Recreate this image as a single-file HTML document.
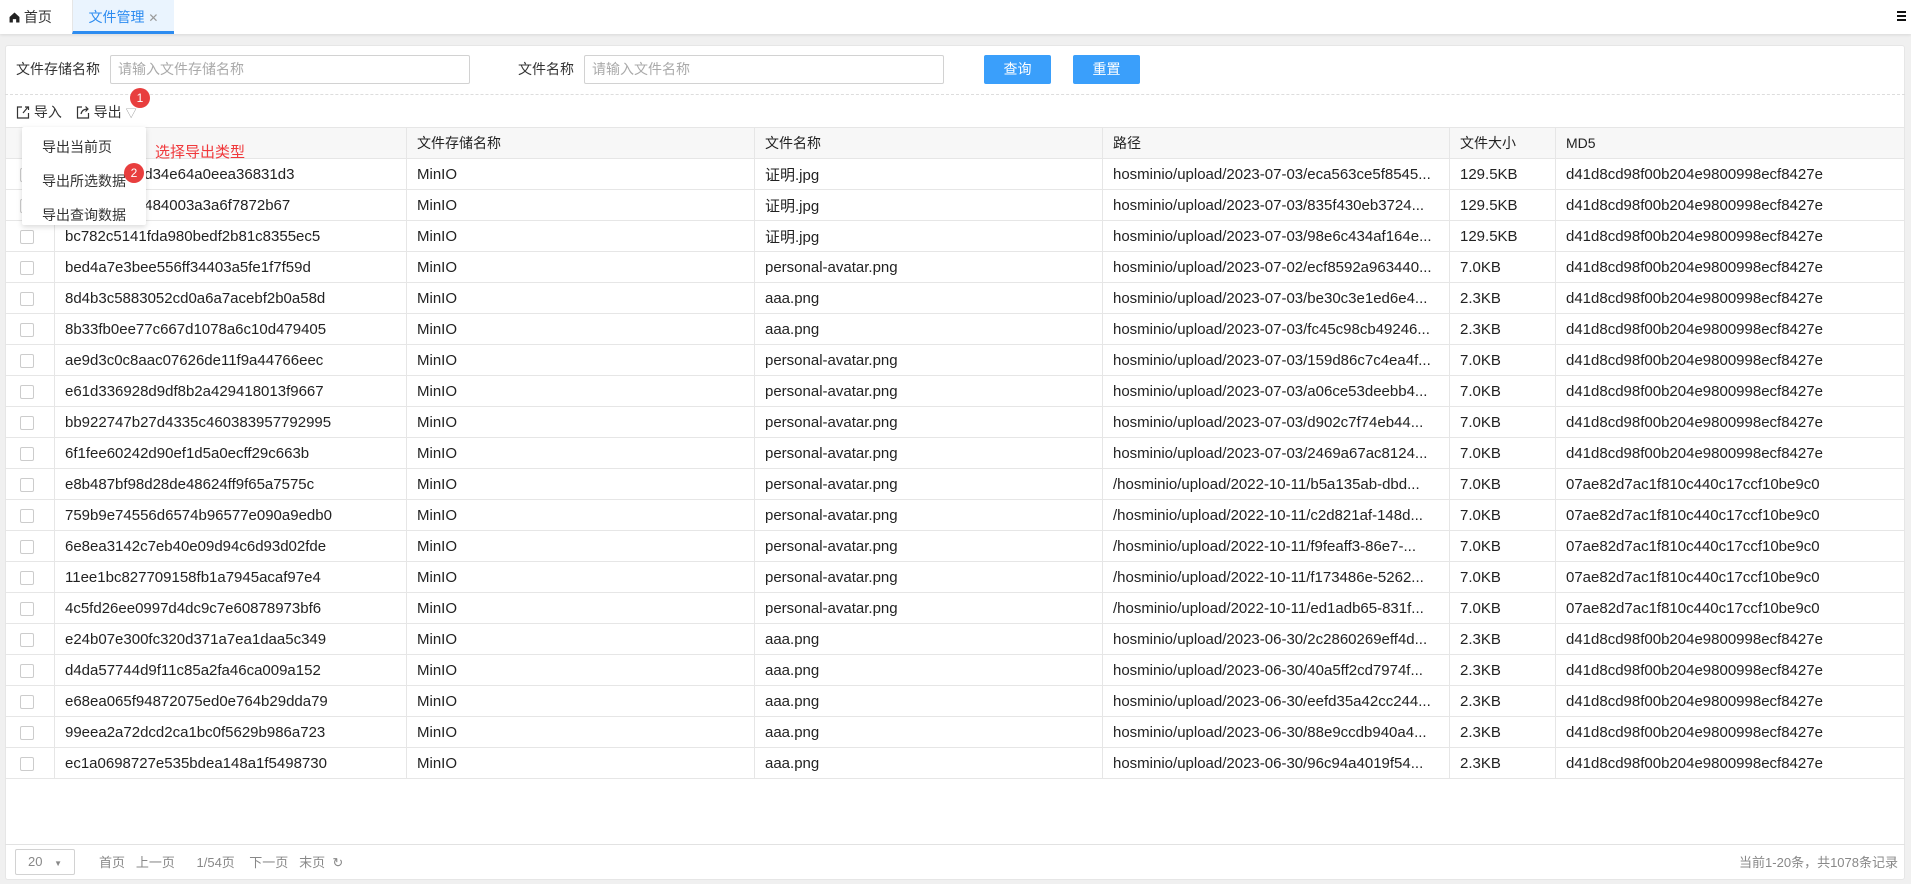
<!DOCTYPE html>
<html><head><meta charset="utf-8"><style>
*{box-sizing:border-box;margin:0;padding:0}
body{width:1911px;height:884px;background:#f0f0f0;font-family:"Liberation Sans","Noto Sans CJK SC",sans-serif;font-size:14px;color:#333;position:relative;overflow:hidden}
.top{position:absolute;left:0;top:0;width:1911px;height:34px;background:#fff;box-shadow:0 1px 3px rgba(0,0,0,.1)}
.tab{position:absolute;top:0;height:34px;line-height:34px;font-size:14px}
.card{position:absolute;left:5px;top:45px;width:1900px;height:835px;background:#fff;border-radius:3px;border:1px solid #e6e6e6}
.lbl{position:absolute;top:59px;font-size:14px;color:#333}
.inp{position:absolute;top:55px;height:29px;border:1px solid #d2d2d2;border-radius:2px;color:#aaa;padding-left:7px;line-height:27px;font-size:14px;background:#fff}
.btn{position:absolute;top:55px;width:67px;height:29px;background:#3a9ffb;color:#fff;text-align:center;line-height:29px;border-radius:2px;font-size:14px}
table{position:absolute;left:5px;top:127px;border-collapse:collapse;table-layout:fixed;width:1900px}
td,th{border:1px solid #e6e6e6;height:31px;padding:0 10px;font-weight:normal;text-align:left;white-space:nowrap;overflow:hidden;font-size:15px;color:#222}
th{background:#f7f7f7;font-size:14px}
.cb{display:inline-block;width:14px;height:14px;border:1px solid #ccc;border-radius:2px;vertical-align:middle;margin-left:4px}
.menu{position:absolute;left:22px;top:127px;width:124px;height:98px;background:#fff;box-shadow:0 2px 6px rgba(0,0,0,.15);z-index:5;border-radius:2px}
.menu div{position:absolute;left:20px;font-size:14px;color:#333}
.badge{position:absolute;width:20px;height:20px;border-radius:50%;background:#e83e3e;color:#fff;font-size:12px;text-align:center;line-height:20px;z-index:6}
.foot{position:absolute;top:845px;font-size:13px;color:#888;line-height:35px}
</style></head><body>
<div class="top">
 <div class="tab" style="left:9px;width:62px"><svg width="11" height="11" viewBox="0 0 10 10" style="vertical-align:-1px"><path d="M5 0.5L0.5 4.5V9.5H3.5V6.5H6.5V9.5H9.5V4.5Z" fill="#222"/></svg> 首页</div>
 <div class="tab" style="left:72px;width:102px;background:#eaf4fe;color:#2d8cf0;text-align:center;border-bottom:3px solid #2d8cf0;border-left:1px solid #e6e6e6">文件管理 <span style="color:#999;font-size:12px">✕</span></div>
 <div style="position:absolute;right:5px;top:11px;width:9px;height:10px;border-top:2px solid #111;border-bottom:2px solid #111"><div style="margin-top:2px;height:2px;background:#111"></div></div>
</div>
<div class="card"></div>
<div class="lbl" style="left:16px">文件存储名称</div>
<div class="inp" style="left:110px;width:360px">请输入文件存储名称</div>
<div class="lbl" style="left:518px">文件名称</div>
<div class="inp" style="left:584px;width:360px">请输入文件名称</div>
<div class="btn" style="left:984px">查询</div>
<div class="btn" style="left:1073px">重置</div>
<div style="position:absolute;left:5px;top:94px;width:1900px;border-top:1px dashed #ddd"></div>
<div style="position:absolute;left:16px;top:102px;font-size:14px">
<svg width="14" height="14" viewBox="0 0 14 14" style="vertical-align:-2px"><path d="M6 2H1.5V13H12.5V8M7 8L12 2M9 2H12.5V5" fill="none" stroke="#333" stroke-width="1.2"/></svg> 导入
<span style="margin-left:10px"><svg width="14" height="14" viewBox="0 0 14 14" style="vertical-align:-2px"><path d="M6 2H1.5V13H12.5V8M5 9Q6 4 12 4M9.5 1.5L12 4L9.5 6.5" fill="none" stroke="#333" stroke-width="1.2"/></svg> 导出 <span style="color:#999;font-size:11px">▽</span></span></div>
<div class="badge" style="left:130px;top:88px">1</div>
<div class="badge" style="left:124px;top:163px">2</div>
<div class="menu"><div style="top:10px">导出当前页</div><div style="top:44px">导出所选数据</div><div style="top:78px">导出查询数据</div></div>
<div style="position:absolute;left:155px;top:141px;color:#f0393c;font-size:15px;z-index:6">选择导出类型</div>
<table>
<colgroup><col style="width:49px"><col style="width:352px"><col style="width:348px"><col style="width:348px"><col style="width:347px"><col style="width:106px"><col></colgroup>
<tr><th></th><th></th><th>文件存储名称</th><th>文件名称</th><th>路径</th><th>文件大小</th><th>MD5</th></tr>
<tr><td><span class="cb"></span></td><td>65a9f333e9d34e64a0eea36831d3</td><td>MinIO</td><td>证明.jpg</td><td>hosminio/upload/2023-07-03/eca563ce5f8545...</td><td>129.5KB</td><td>d41d8cd98f00b204e9800998ecf8427e</td></tr>
<tr><td><span class="cb"></span></td><td>3a81e0f470484003a3a6f7872b67</td><td>MinIO</td><td>证明.jpg</td><td>hosminio/upload/2023-07-03/835f430eb3724...</td><td>129.5KB</td><td>d41d8cd98f00b204e9800998ecf8427e</td></tr>
<tr><td><span class="cb"></span></td><td>bc782c5141fda980bedf2b81c8355ec5</td><td>MinIO</td><td>证明.jpg</td><td>hosminio/upload/2023-07-03/98e6c434af164e...</td><td>129.5KB</td><td>d41d8cd98f00b204e9800998ecf8427e</td></tr>
<tr><td><span class="cb"></span></td><td>bed4a7e3bee556ff34403a5fe1f7f59d</td><td>MinIO</td><td>personal-avatar.png</td><td>hosminio/upload/2023-07-02/ecf8592a963440...</td><td>7.0KB</td><td>d41d8cd98f00b204e9800998ecf8427e</td></tr>
<tr><td><span class="cb"></span></td><td>8d4b3c5883052cd0a6a7acebf2b0a58d</td><td>MinIO</td><td>aaa.png</td><td>hosminio/upload/2023-07-03/be30c3e1ed6e4...</td><td>2.3KB</td><td>d41d8cd98f00b204e9800998ecf8427e</td></tr>
<tr><td><span class="cb"></span></td><td>8b33fb0ee77c667d1078a6c10d479405</td><td>MinIO</td><td>aaa.png</td><td>hosminio/upload/2023-07-03/fc45c98cb49246...</td><td>2.3KB</td><td>d41d8cd98f00b204e9800998ecf8427e</td></tr>
<tr><td><span class="cb"></span></td><td>ae9d3c0c8aac07626de11f9a44766eec</td><td>MinIO</td><td>personal-avatar.png</td><td>hosminio/upload/2023-07-03/159d86c7c4ea4f...</td><td>7.0KB</td><td>d41d8cd98f00b204e9800998ecf8427e</td></tr>
<tr><td><span class="cb"></span></td><td>e61d336928d9df8b2a429418013f9667</td><td>MinIO</td><td>personal-avatar.png</td><td>hosminio/upload/2023-07-03/a06ce53deebb4...</td><td>7.0KB</td><td>d41d8cd98f00b204e9800998ecf8427e</td></tr>
<tr><td><span class="cb"></span></td><td>bb922747b27d4335c460383957792995</td><td>MinIO</td><td>personal-avatar.png</td><td>hosminio/upload/2023-07-03/d902c7f74eb44...</td><td>7.0KB</td><td>d41d8cd98f00b204e9800998ecf8427e</td></tr>
<tr><td><span class="cb"></span></td><td>6f1fee60242d90ef1d5a0ecff29c663b</td><td>MinIO</td><td>personal-avatar.png</td><td>hosminio/upload/2023-07-03/2469a67ac8124...</td><td>7.0KB</td><td>d41d8cd98f00b204e9800998ecf8427e</td></tr>
<tr><td><span class="cb"></span></td><td>e8b487bf98d28de48624ff9f65a7575c</td><td>MinIO</td><td>personal-avatar.png</td><td>/hosminio/upload/2022-10-11/b5a135ab-dbd...</td><td>7.0KB</td><td>07ae82d7ac1f810c440c17ccf10be9c0</td></tr>
<tr><td><span class="cb"></span></td><td>759b9e74556d6574b96577e090a9edb0</td><td>MinIO</td><td>personal-avatar.png</td><td>/hosminio/upload/2022-10-11/c2d821af-148d...</td><td>7.0KB</td><td>07ae82d7ac1f810c440c17ccf10be9c0</td></tr>
<tr><td><span class="cb"></span></td><td>6e8ea3142c7eb40e09d94c6d93d02fde</td><td>MinIO</td><td>personal-avatar.png</td><td>/hosminio/upload/2022-10-11/f9feaff3-86e7-...</td><td>7.0KB</td><td>07ae82d7ac1f810c440c17ccf10be9c0</td></tr>
<tr><td><span class="cb"></span></td><td>11ee1bc827709158fb1a7945acaf97e4</td><td>MinIO</td><td>personal-avatar.png</td><td>/hosminio/upload/2022-10-11/f173486e-5262...</td><td>7.0KB</td><td>07ae82d7ac1f810c440c17ccf10be9c0</td></tr>
<tr><td><span class="cb"></span></td><td>4c5fd26ee0997d4dc9c7e60878973bf6</td><td>MinIO</td><td>personal-avatar.png</td><td>/hosminio/upload/2022-10-11/ed1adb65-831f...</td><td>7.0KB</td><td>07ae82d7ac1f810c440c17ccf10be9c0</td></tr>
<tr><td><span class="cb"></span></td><td>e24b07e300fc320d371a7ea1daa5c349</td><td>MinIO</td><td>aaa.png</td><td>hosminio/upload/2023-06-30/2c2860269eff4d...</td><td>2.3KB</td><td>d41d8cd98f00b204e9800998ecf8427e</td></tr>
<tr><td><span class="cb"></span></td><td>d4da57744d9f11c85a2fa46ca009a152</td><td>MinIO</td><td>aaa.png</td><td>hosminio/upload/2023-06-30/40a5ff2cd7974f...</td><td>2.3KB</td><td>d41d8cd98f00b204e9800998ecf8427e</td></tr>
<tr><td><span class="cb"></span></td><td>e68ea065f94872075ed0e764b29dda79</td><td>MinIO</td><td>aaa.png</td><td>hosminio/upload/2023-06-30/eefd35a42cc244...</td><td>2.3KB</td><td>d41d8cd98f00b204e9800998ecf8427e</td></tr>
<tr><td><span class="cb"></span></td><td>99eea2a72dcd2ca1bc0f5629b986a723</td><td>MinIO</td><td>aaa.png</td><td>hosminio/upload/2023-06-30/88e9ccdb940a4...</td><td>2.3KB</td><td>d41d8cd98f00b204e9800998ecf8427e</td></tr>
<tr><td><span class="cb"></span></td><td>ec1a0698727e535bdea148a1f5498730</td><td>MinIO</td><td>aaa.png</td><td>hosminio/upload/2023-06-30/96c94a4019f54...</td><td>2.3KB</td><td>d41d8cd98f00b204e9800998ecf8427e</td></tr>
</table>
<div style="position:absolute;left:5px;top:844px;width:1900px;border-top:1px solid #e2e2e2"></div>
<div style="position:absolute;left:15px;top:849px;width:60px;height:26px;border:1px solid #d2d2d2;border-radius:2px;font-size:13px;color:#888;line-height:24px;padding-left:12px">20 <span style="font-size:8px;margin-left:8px">▼</span></div>
<div class="foot" style="left:99px">首页 &nbsp;&nbsp;上一页 &nbsp;&nbsp;&nbsp;&nbsp;&nbsp;1/54页 &nbsp;&nbsp;&nbsp;下一页 &nbsp;&nbsp;末页 &nbsp;↻</div>
<div class="foot" style="right:13px">当前1-20条，共1078条记录</div>
</body></html>
